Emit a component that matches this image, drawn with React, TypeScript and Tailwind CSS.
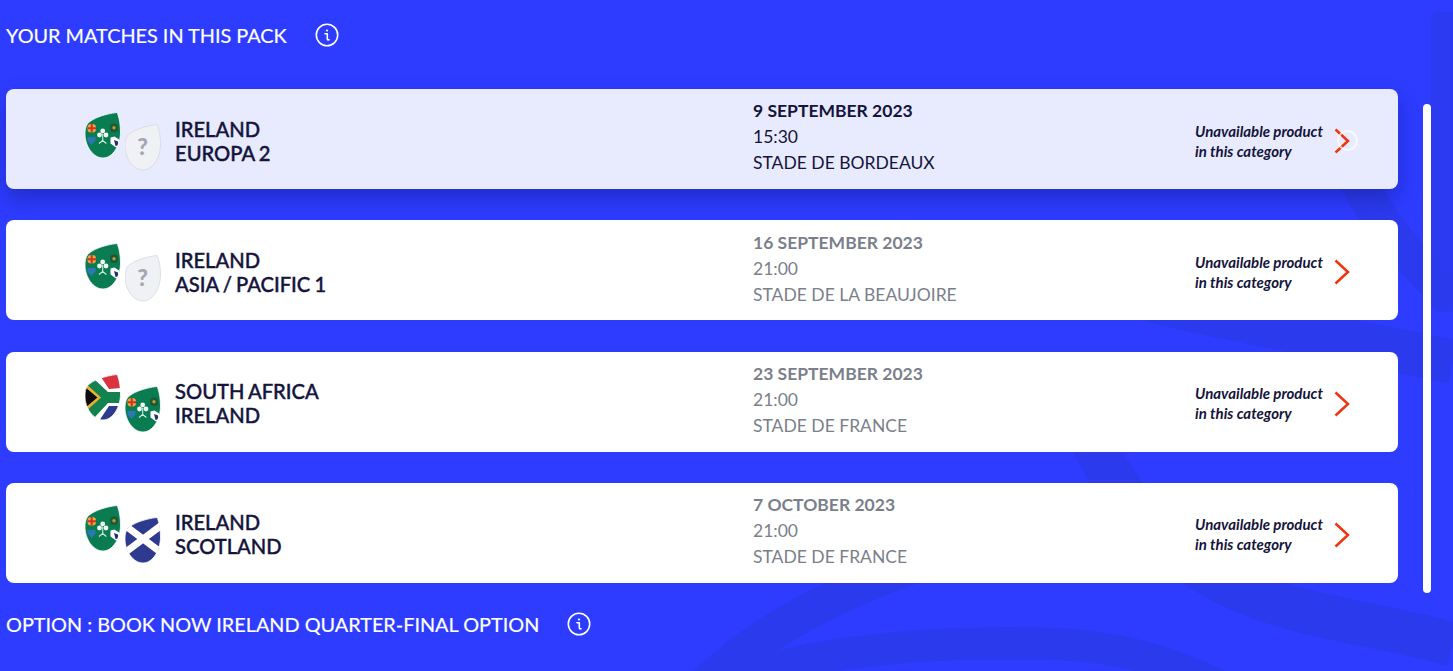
import React, { useId } from 'react';

type Team = 'ireland' | 'unknown' | 'southafrica' | 'scotland';

const SHIELD = 'M31 .6Q32.200 .2 32.600 1.400C34.500 7 35.500 13 35.500 20C35.500 33 28 46 18 46C8 46 0 34 0 22C0 17 1 12 5 9.500C11 5 21 2 31 .6Z';

const Shield = ({ team }: { team: Team }) => {
  const id = useId();
  return (
    <svg width="36" height="47" viewBox="0 0 36 47" className="block shrink-0">
      <defs>
        <clipPath id={id}>
          <path d={SHIELD} />
        </clipPath>
      </defs>
      <g clipPath={`url(#${id})`}>
        {team === 'ireland' && (
          <>
            <rect width="36" height="47" fill="#0a7c52" />
            {/* provinces */}
            <rect x="2.500" y="12" width="8.500" height="8.500" rx="3.500" fill="#e9a83a" />
            <path d="M6.700 12v8.500M2.500 16.200h8.500" stroke="#c8352b" strokeWidth="2" />
            <rect x="25" y="11.500" width="8" height="8.500" rx="3.500" fill="#1d5a33" />
            <circle cx="29" cy="15.700" r="1.700" fill="#b99b3c" />
            <path d="M2.500 25h8v3.500L6.500 33 2.500 28.500z" fill="#2a78b4" />
            <path d="M25.500 25.500l4-1 4.500 3v6.500l-3 1.500-5.500-4z" fill="#fff" />
            <path d="M29 28l4 1.500v4l-2.500 .5z" fill="#26306f" />
            {/* shamrock */}
            <circle cx="17.700" cy="19" r="2.400" fill="#eef8f3" />
            <circle cx="14.500" cy="23" r="2.400" fill="#eef8f3" />
            <circle cx="21" cy="23" r="2.400" fill="#eef8f3" />
            <path d="M17.700 22v8M14 31.500l3.700-3 3.700 3" stroke="#d5ece1" strokeWidth="1.100" fill="none" />
          </>
        )}
        {team === 'unknown' && (
          <>
            <rect width="36" height="47" fill="#f0f1f5" />
            <text x="17.500" y="31" textAnchor="middle" fontSize="23" fontWeight="900" fill="#a4a8b4" fontFamily="Lato, sans-serif">?</text>
          </>
        )}
        {team === 'southafrica' && (
          <>
            <rect width="36" height="47" fill="#fff" />
            <polygon points="14,0 36,0 36,14 24,15" fill="#d8333f" />
            <polygon points="14,47 36,47 36,32 24,32" fill="#2c3a8f" />
            <polygon points="0,5 9,5 23,18 36,18 36,29 23,29 9,44 0,44" fill="#14824f" />
            <polygon points="0,9 16,23.500 0,38" fill="#f0b12c" />
            <polygon points="0,13 12.500,23.500 0,34" fill="#0c0c12" />
          </>
        )}
        {team === 'scotland' && (
          <>
            <rect width="36" height="47" fill="#2e3a8f" />
            <path d="M-2 7L38 37M38 7L-2 37" stroke="#fff" strokeWidth="7" />
          </>
        )}
      </g>
      <path d={SHIELD} fill="none" stroke={team === 'unknown' ? '#d6d8de' : '#ffffff'} strokeWidth=".8" />
    </svg>
  );
};

const InfoIcon = () => (
  <svg width="24" height="24" viewBox="0 0 24 24" fill="none" className="block">
    <circle cx="12" cy="12" r="10.700" stroke="#fff" strokeWidth="1.600" />
    <circle cx="12" cy="7.500" r="1.100" fill="#fff" />
    <path d="M10 10.800h2.300v5c0 1 .6 1.300 1.700 1" stroke="#fff" strokeWidth="1.600" strokeLinecap="round" strokeLinejoin="round" />
  </svg>
);

const Chevron = () => (
  <svg width="16" height="26" viewBox="0 0 16 26" fill="none" className="block">
    <path d="M1.500 1.500L14 13L1.500 24.500" stroke="#f0340f" strokeWidth="2.500" />
  </svg>
);

const matches: { teams: [Team, Team]; names: [string, string]; date: string; time: string; venue: string; active?: boolean }[] = [
  { teams: ['ireland', 'unknown'], names: ['IRELAND', 'EUROPA 2'], date: '9 SEPTEMBER 2023', time: '15:30', venue: 'STADE DE BORDEAUX', active: true },
  { teams: ['ireland', 'unknown'], names: ['IRELAND', 'ASIA / PACIFIC 1'], date: '16 SEPTEMBER 2023', time: '21:00', venue: 'STADE DE LA BEAUJOIRE' },
  { teams: ['southafrica', 'ireland'], names: ['SOUTH AFRICA', 'IRELAND'], date: '23 SEPTEMBER 2023', time: '21:00', venue: 'STADE DE FRANCE' },
  { teams: ['ireland', 'scotland'], names: ['IRELAND', 'SCOTLAND'], date: '7 OCTOBER 2023', time: '21:00', venue: 'STADE DE FRANCE' },
];

const MatchCard = ({ m }: { m: (typeof matches)[number] }) => (
  <div
    className={
      m.active
        ? 'flex h-[100px] items-center rounded-lg bg-[#e8ebfd] shadow-[0_10px_20px_rgba(15,20,110,0.35)]'
        : 'flex h-[100px] items-center rounded-lg bg-white'
    }
  >
    <div className="ml-[79px] mt-[4px] flex w-[90px] shrink-0 gap-1">
      <div className="mb-[12px]"><Shield team={m.teams[0]} /></div>
      <div className="mt-[12px]"><Shield team={m.teams[1]} /></div>
    </div>
    <div className="mt-[3px] w-[578px] shrink-0 text-[20.200px] font-medium leading-[24px] text-[#14143c] [word-spacing:-1px] [-webkit-text-stroke:0.4px_#14143c]">
      <div>{m.names[0]}</div>
      <div>{m.names[1]}</div>
    </div>
    <div className={m.active ? 'mb-[3.400px] w-[442px] shrink-0 text-[17.500px] leading-[26px] text-[#14143c]' : 'mb-[3.400px] w-[442px] shrink-0 text-[17.500px] leading-[26px] text-[#7b7f8c]'}>
      <div className="font-bold">{m.date}</div>
      <div>{m.time}</div>
      <div>{m.venue}</div>
    </div>
    <div className="mt-[3.100px] w-[139px] shrink-0 text-[15px] font-bold italic leading-[20px] text-[#14143c]">
      <div>Unavailable product</div>
      <div>in this category</div>
    </div>
    <div className="relative mt-[4px]">
      <Chevron />
      {m.active && <div className="absolute left-[3px] top-[2px] h-[21px] w-[21px] rounded-full border-2 border-white/70" />}
    </div>
  </div>
);

const SectionTitle = ({ text }: { text: string }) => (
  <div className="flex items-center">
    <span className="text-[19.850px] leading-[24px] text-white [-webkit-text-stroke:0.2px_#ffffff]">{text}</span>
    <span className="ml-[28px]"><InfoIcon /></span>
  </div>
);

const App = () => {
  return (
    <div className="relative h-[671px] w-[1453px] overflow-hidden bg-[#2d3cff] font-['Lato',sans-serif]">
      {/* Background arcs */}
      <svg width="1453" height="671" viewBox="0 0 1453 671" fill="none" className="absolute left-0 top-0">
        <rect x="1431" y="12" width="40" height="300" rx="8" fill="#2c3af2" />
        <g stroke="#2b3aed">
          <path d="M690 700C780 650 930 640 1056 644C1130 647 1200 670 1260 710" strokeWidth="32" />
          <path d="M930 560C840 590 760 630 700 690" strokeWidth="36" />
          <path d="M1075 400C1100 470 1150 550 1240 590C1310 620 1390 625 1453 645" strokeWidth="44" />
          <path d="M1150 300C1250 325 1350 340 1453 362" strokeWidth="44" />
          <path d="M1340 150C1370 210 1400 250 1453 300" strokeWidth="36" />
        </g>
      </svg>

      <div className="relative flex flex-col pl-[6px]">
        <div className="flex h-[70px] items-center">
          <SectionTitle text="YOUR MATCHES IN THIS PACK" />
        </div>
        <div className="mt-[19px] flex">
          <div className="flex w-[1392px] flex-col gap-[31.300px]">
            {matches.map((m) => (
              <MatchCard key={m.date} m={m} />
            ))}
          </div>
          <div className="ml-[25px] mt-[15px] h-[489px] w-2 rounded-full bg-white" />
        </div>
        <div className="mt-[13px] flex h-[36px] items-center">
          <SectionTitle text="OPTION : BOOK NOW IRELAND QUARTER-FINAL OPTION" />
        </div>
      </div>
    </div>
  );
};

export default App;
